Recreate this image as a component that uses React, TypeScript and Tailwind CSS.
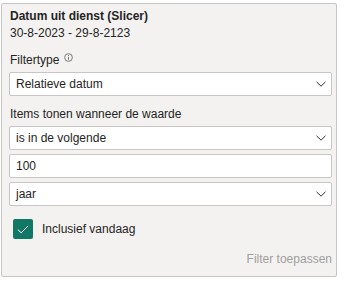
import React from "react";

function Chevron() {
  return (
    <svg width="10" height="6" viewBox="0 0 10 6" className="shrink-0">
      <path d="M0.5 0.8 L5 5.2 L9.5 0.8" fill="none" stroke="#323130" strokeWidth="1" />
    </svg>
  );
}

function Field({ value, select = false }: { value: string; select?: boolean }) {
  return (
    <div className="flex items-center justify-between h-[24px] w-[323px] bg-white border border-[#c8c6c4] rounded-[2px] pl-[6px] pr-[5px] text-[12px] text-[#252423]">
      <span>{value}</span>
      {select && <Chevron />}
    </div>
  );
}

export default function App() {
  return (
    <div className="bg-white min-h-screen pt-[3px] pl-[1px]" style={{ fontFamily: '"Segoe UI", "Liberation Sans", Arial, sans-serif' }}>
      <div className="w-[336px] h-[274px] border border-[#c8c6c4] rounded-[2px] bg-[#f3f2f1] pl-[8px] pr-[3px] pt-[4px] flex flex-col text-[#252423] text-[12px] leading-[17px]">
        <div className="font-bold">Datum uit dienst (Slicer)</div>
        <div>30-8-2023 - 29-8-2123</div>
        <div className="mt-[10px] flex items-center gap-[5px]">
          <span>Filtertype</span>
          <svg width="9" height="9" viewBox="0 0 10 10" className="-mt-[6px]">
            <circle cx="5" cy="5" r="4.3" fill="none" stroke="#605e5c" strokeWidth="0.9" />
            <line x1="5" y1="4.3" x2="5" y2="7.6" stroke="#605e5c" strokeWidth="0.9" />
            <circle cx="5" cy="2.8" r="0.6" fill="#605e5c" />
          </svg>
        </div>
        <div className="mt-[3px] -ml-[1px]">
          <Field value="Relatieve datum" select />
        </div>
        <div className="mt-[10px]">Items tonen wanneer de waarde</div>
        <div className="mt-[3px] -ml-[1px] flex flex-col gap-[4px]">
          <Field value="is in de volgende" select />
          <Field value="100" />
          <Field value="jaar" select />
        </div>
        <div className="mt-[13px] flex items-center gap-[9px] pl-[3px]">
          <div className="w-[20px] h-[20px] rounded-[2px] bg-[#117865] flex items-center justify-center">
            <svg width="12" height="9" viewBox="0 0 12 9">
              <path d="M0.8 4.6 L4.2 7.8 L11.2 0.8" fill="none" stroke="#ffffff" strokeWidth="1" />
            </svg>
          </div>
          <span>Inclusief vandaag</span>
        </div>
        <div className="mt-auto mb-[8px] text-right pr-[1px] text-[#a19f9d]">Filter toepassen</div>
      </div>
    </div>
  );
}
